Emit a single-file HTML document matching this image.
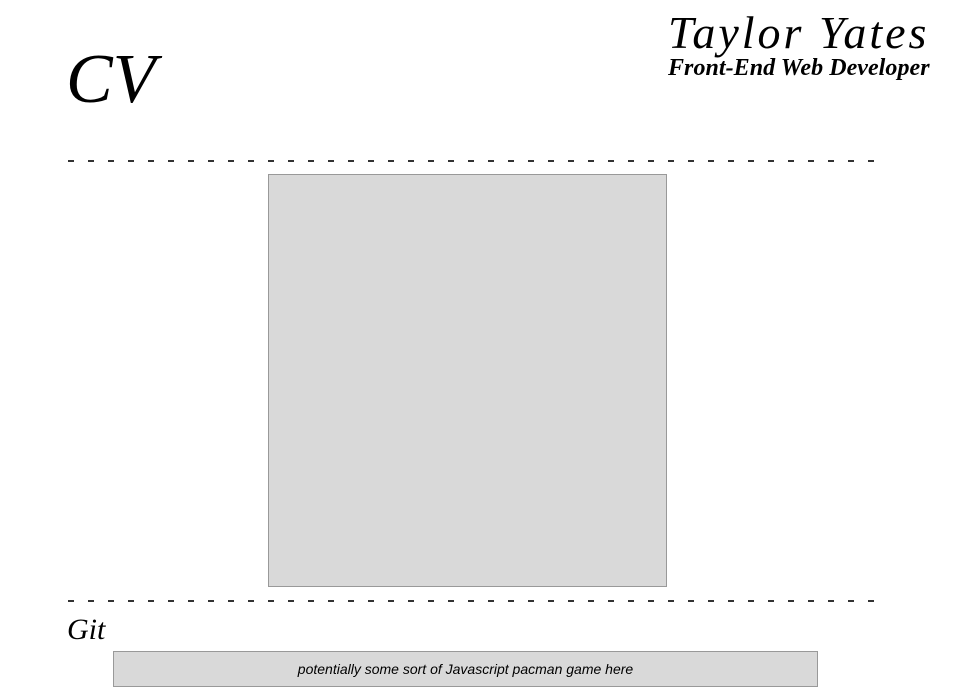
<!DOCTYPE html>
<html><head><meta charset="utf-8"><style>
body{margin:0;width:955px;height:699px;background:#fff;position:relative;overflow:hidden;font-family:"Liberation Serif",serif;}
.s{position:absolute;font-style:italic;color:#000;white-space:nowrap;}
.dash{position:absolute;left:68px;width:808px;height:2px;background:repeating-linear-gradient(90deg,#333 0 6px,transparent 6px 20px);}
.box{position:absolute;background:#d9d9d9;border:1px solid #999;box-sizing:border-box;}
</style></head><body>
<div class="s" style="left:66px;top:38px;font-size:70px;line-height:84px;">CV</div>
<div class="s" style="left:668px;top:6px;font-size:46px;line-height:54px;letter-spacing:3px;">Taylor Yates</div>
<div class="s" style="left:668px;top:54px;font-size:24px;line-height:28px;font-weight:bold;letter-spacing:0.05px;">Front-End Web Developer</div>
<div class="dash" style="top:160px"></div>
<div class="box" style="left:268px;top:174px;width:399px;height:413px;"></div>
<div class="dash" style="top:600px"></div>
<div class="s" style="left:67px;top:612px;font-size:30px;line-height:36px;">Git</div>
<div class="box" style="left:113px;top:651px;width:705px;height:36px;font-family:'Liberation Sans',sans-serif;font-style:italic;font-size:14px;text-align:center;line-height:34px;">potentially some sort of Javascript pacman game here</div>
</body></html>
